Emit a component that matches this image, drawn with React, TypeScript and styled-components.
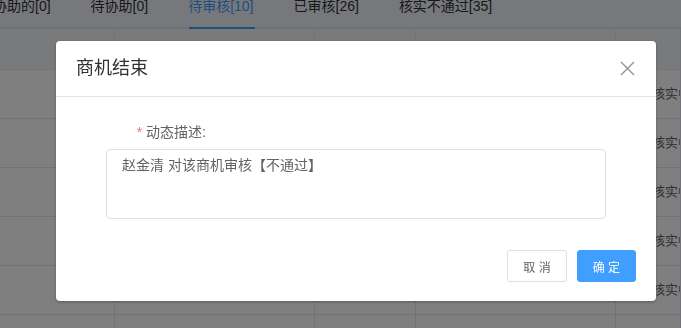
import React from "react";
import styled, { createGlobalStyle } from "styled-components";

const GlobalStyle = createGlobalStyle`
  html, body {
    margin: 0;
    padding: 0;
    background: #ffffff;
    overflow: hidden;
  }
  body {
    font-family: "Liberation Sans", "Noto Sans CJK SC", sans-serif;
    font-size: 14px;
    color: #606266;
  }
`;

const Page = styled.div`
  width: 681px;
  height: 328px;
  overflow: hidden;
  background: #ffffff;
`;

const TabBar = styled.div`
  display: flex;
  gap: 40px;
  margin-top: -4px;
  padding-left: 0;
  height: 33px;
  background: #eef1f6;
  border-bottom: 2px solid #dfe4ed;
  box-sizing: border-box;
  & > :first-child {
    margin-left: -21px;
  }
`;

const Tab = styled.div<{ $active?: boolean }>`
  position: relative;
  line-height: 20px;
  height: 31px;
  white-space: nowrap;
  color: ${(p) => (p.$active ? "#409eff" : "#303133")};
  &::after {
    content: "";
    display: ${(p) => (p.$active ? "block" : "none")};
    position: absolute;
    left: 1px;
    right: -1px;
    bottom: -2px;
    height: 2px;
    background: #409eff;
  }
`;

const Table = styled.div`
  display: grid;
  grid-template-columns: 115px 200px 101px 200px 65px;
`;

const HeadCell = styled.div`
  height: 40px;
  background: #f2f4f7;
  border-right: 1px solid #e4e7ed;
  border-bottom: 1px solid #e4e7ed;
`;

const Cell = styled.div`
  height: 49px;
  border-right: 1px solid #e4e7ed;
  border-bottom: 1px solid #e4e7ed;
  display: flex;
  align-items: center;
  padding: 0 0 4px 36px;
  box-sizing: border-box;
  font-size: 13px;
  color: #606266;
  white-space: nowrap;
  overflow: hidden;
`;

const Mask = styled.div`
  position: fixed;
  inset: 0;
  background: rgba(0, 0, 0, 0.5);
`;

const Dialog = styled.div`
  position: fixed;
  top: 41px;
  left: 56px;
  width: 600px;
  background: #ffffff;
  border-radius: 4px;
  box-shadow: 0 1px 3px rgba(0, 0, 0, 0.3);
  display: flex;
  flex-direction: column;
`;

const Header = styled.div`
  display: flex;
  align-items: center;
  justify-content: space-between;
  padding: 15px 20px 16px;
  border-bottom: 1px solid #e4e4ea;
`;

const Title = styled.span`
  font-size: 18px;
  line-height: 24px;
  color: #303133;
`;

const CloseButton = styled.button`
  border: none;
  background: none;
  padding: 0;
  width: 16px;
  height: 16px;
  display: flex;
  align-items: center;
  justify-content: center;
  cursor: pointer;
  margin-right: 1px;
`;

const Body = styled.div`
  padding: 25px 50px 31px;
`;

const LabelRow = styled.div`
  width: 100px;
  text-align: right;
  line-height: 20px;
  font-size: 14px;
  color: #606266;
  margin-bottom: 7px;
`;

const Star = styled.span`
  color: #f56c6c;
  margin-right: 4px;
`;

const TextArea = styled.textarea`
  display: block;
  width: 500px;
  height: 70px;
  box-sizing: border-box;
  padding: 5px 15px;
  border: 1px solid #dcdfe6;
  border-radius: 4px;
  font-family: inherit;
  font-size: 14px;
  line-height: 21px;
  color: #606266;
  resize: none;
  outline: none;
`;

const Footer = styled.div`
  display: flex;
  justify-content: flex-end;
  gap: 10px;
  padding: 0 20px 19px;
`;

const Button = styled.button<{ $primary?: boolean }>`
  height: 32px;
  padding: 0 15px;
  font-family: inherit;
  font-size: 12px;
  border-radius: 3px;
  border: 1px solid ${(p) => (p.$primary ? "#409eff" : "#dcdfe6")};
  background: ${(p) => (p.$primary ? "#409eff" : "#ffffff")};
  color: ${(p) => (p.$primary ? "#ffffff" : "#606266")};
  cursor: pointer;
`;

const tabs = [
  { label: "我协助的[0]" },
  { label: "待协助[0]" },
  { label: "待审核[10]", active: true },
  { label: "已审核[26]" },
  { label: "核实不通过[35]" },
];

const columns = [0, 1, 2, 3, 4];
const rows = [0, 1, 2, 3, 4, 5];

export default function App() {
  return (
    <>
      <GlobalStyle />
      <Page>
        <TabBar>
          {tabs.map((t) => (
            <Tab key={t.label} $active={t.active}>
              {t.label}
            </Tab>
          ))}
        </TabBar>
        <Table>
          {columns.map((c) => (
            <HeadCell key={"h" + c} />
          ))}
          {rows.map((r) =>
            columns.map((c) => (
              <Cell key={r + "-" + c}>{c === 4 && r < 5 ? "核实中" : ""}</Cell>
            ))
          )}
        </Table>
      </Page>
      <Mask />
      <Dialog>
        <Header>
          <Title>商机结束</Title>
          <CloseButton aria-label="关闭">
            <svg width="15" height="15" viewBox="0 0 15 15">
              <path d="M1 1 L14 14 M14 1 L1 14" stroke="#909399" strokeWidth="1.4" fill="none" />
            </svg>
          </CloseButton>
        </Header>
        <Body>
          <LabelRow>
            <Star>*</Star>动态描述:
          </LabelRow>
          <TextArea defaultValue="赵金清 对该商机审核【不通过】" />
        </Body>
        <Footer>
          <Button>取 消</Button>
          <Button $primary>确 定</Button>
        </Footer>
      </Dialog>
    </>
  );
}
